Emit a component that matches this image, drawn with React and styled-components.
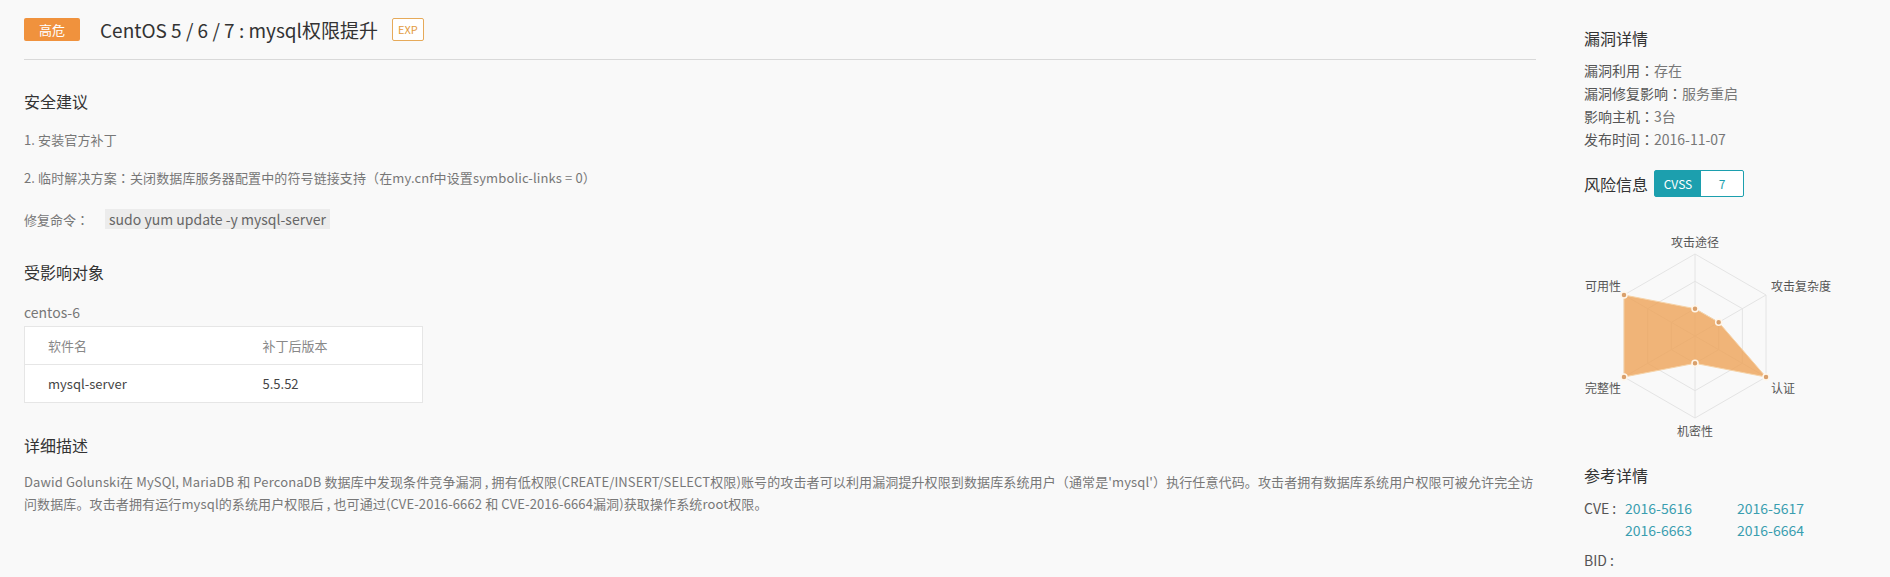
import React from "react";
import styled, { createGlobalStyle } from "styled-components";

const GlobalStyle = createGlobalStyle`
  body {
    margin: 0;
    background: #f9f9f9;
    font-family: "Noto Sans CJK SC", "Noto Sans", sans-serif;
    color: #666;
  }
`;

const Page = styled.div`
  display: flex;
  gap: 48px;
  padding: 0 24px;
  min-height: 577px;
  box-sizing: border-box;
`;

const Main = styled.main`
  flex: 1;
  min-width: 0;
`;

const Header = styled.header`
  display: flex;
  align-items: center;
  padding: 17px 0 18px;
  height: 24px;
  border-bottom: 1px solid #d9d9d9;
`;

const LevelBadge = styled.span`
  display: inline-flex;
  align-items: center;
  justify-content: center;
  width: 56px;
  height: 23px;
  background: #f0923d;
  color: #fff;
  font-size: 13px;
  border-radius: 2px;
`;

const Title = styled.h1`
  margin: 0 0 0 20px;
  font-size: 19px;
  font-weight: 400;
  color: #333;
`;

const ExpTag = styled.span`
  margin-left: 14px;
  padding: 2px 5px;
  border: 1px solid #e6aa5a;
  border-radius: 2px;
  background: #fff;
  color: #e39b3c;
  font-size: 11px;
  line-height: 17px;
`;

// centred full-width colon, as the original CJK font draws it
const Colon = styled.span`
  font-family: "Noto Sans CJK TC", "Noto Sans CJK SC", sans-serif;
`;

const SectionTitle = styled.h2`
  margin: ${({ $top }) => $top}px 0 0;
  font-size: 16px;
  font-weight: 400;
  line-height: 22px;
  color: #333;
`;

const Advice = styled.p`
  margin: 18px 0 0;
  font-size: 13px;
  line-height: 20px;
  letter-spacing: 0.12px;
  color: #777;
`;

const CommandRow = styled.div`
  display: flex;
  align-items: center;
  margin-top: 19px;
  height: 24px;
  font-size: 13px;
  color: #777;
`;

const Code = styled.code`
  margin-left: 16px;
  padding: 0 4px;
  background: #ececec;
  font-family: "Noto Sans CJK SC", "Noto Sans", sans-serif;
  font-size: 14px;
  line-height: 20px;
  color: #666;
`;

const HostName = styled.div`
  margin: 19px 0 4px;
  font-size: 14px;
  line-height: 20px;
  color: #777;
`;

const Table = styled.table`
  width: 399px;
  table-layout: fixed;
  border-collapse: collapse;
  background: #fff;
  border: 1px solid #e6e6e6;
  font-size: 13px;
`;

const Cell = styled.td`
  box-sizing: border-box;
  height: 38px;
  padding: 0 0 0 23px;
  width: ${({ $w }) => $w || "auto"};
  color: ${({ $head }) => ($head ? "#888" : "#444")};
  border-bottom: 1px solid #e6e6e6;
`;

const Description = styled.p`
  margin: 15px 0 0;
  font-size: 13px;
  line-height: 22px;
  letter-spacing: 0.12px;
  color: #777;
`;

const Sidebar = styled.aside`
  width: 282px;
  flex-shrink: 0;
  padding-top: 27px;
`;

const SideTitle = styled.h3`
  margin: ${({ $top }) => $top || 0}px 0 0;
  font-size: 16px;
  font-weight: 400;
  line-height: 22px;
  color: #333;
`;

const InfoList = styled.div`
  margin-top: 10px;
  font-size: 14px;
  line-height: 23px;
  color: #777;
`;

const InfoLabel = styled.span`
  color: #555;
`;

const RiskRow = styled.div`
  display: flex;
  align-items: center;
  margin-top: 19px;
  gap: 6px;
`;

const CvssBox = styled.div`
  display: flex;
  height: 25px;
  border: 1px solid #1c9fae;
  border-radius: 2px;
  background: #fff;
  font-size: 12px;
`;

const CvssLabel = styled.span`
  display: flex;
  align-items: center;
  justify-content: center;
  width: 46px;
  background: #1c9fae;
  color: #fff;
`;

const CvssScore = styled.span`
  display: flex;
  align-items: center;
  justify-content: center;
  width: 42px;
  color: #1c9fae;
`;

const Radar = styled.svg`
  display: block;
  margin-top: 30px;
  overflow: visible;
`;

const RefRow = styled.div`
  display: flex;
  align-items: flex-start;
  margin-top: ${({ $top }) => $top}px;
  font-size: 14px;
  line-height: 22px;
  color: #555;
`;

const RefLabel = styled.span`
  width: 41px;
  flex-shrink: 0;
  white-space: nowrap;
`;

const RefLinks = styled.div`
  display: grid;
  grid-template-columns: 112px 112px;
`;

const RefLink = styled.a`
  color: #3a9eb0;
  text-decoration: none;
`;

const info = [
  ["漏洞利用", "存在"],
  ["漏洞修复影响", "服务重启"],
  ["影响主机", "3台"],
  ["发布时间", "2016-11-07"],
];

const cves = ["2016-5616", "2016-5617", "2016-6663", "2016-6664"];

const axes = [
  { label: "攻击途径", value: 1 / 3, angle: -90, lx: 111, ly: 20, anchor: "middle" },
  { label: "攻击复杂度", value: 1 / 3, angle: -30, lx: 187, ly: 64, anchor: "start" },
  { label: "认证", value: 1, angle: 30, lx: 187, ly: 166, anchor: "start" },
  { label: "机密性", value: 1 / 3, angle: 90, lx: 111, ly: 209, anchor: "middle" },
  { label: "完整性", value: 1, angle: 150, lx: 37, ly: 166, anchor: "end" },
  { label: "可用性", value: 1, angle: 210, lx: 37, ly: 64, anchor: "end" },
];

const CX = 111;
const CY = 109;
const R = 82;

const pt = (angle, r) => {
  const a = (angle * Math.PI) / 180;
  return [CX + r * Math.cos(a), CY + r * Math.sin(a)];
};

function RadarChart() {
  const ring = (f) => axes.map((a) => pt(a.angle, R * f).join(",")).join(" ");
  const data = axes.map((a) => pt(a.angle, R * a.value));
  return (
    <Radar width="260" height="216" viewBox="0 0 260 216">
      {[1 / 3, 2 / 3, 1].map((f) => (
        <polygon key={f} points={ring(f)} fill="none" stroke="#e4e4e4" strokeWidth="1" />
      ))}
      {axes.map((a) => {
        const [x, y] = pt(a.angle, R);
        return <line key={a.label} x1={CX} y1={CY} x2={x} y2={y} stroke="#e4e4e4" strokeWidth="1" />;
      })}
      <polygon
        points={data.map((p) => p.join(",")).join(" ")}
        fill="rgba(238, 163, 88, 0.8)"
        stroke="#f6d3a8"
        strokeWidth="1"
      />
      {data.map(([x, y], i) => (
        <circle key={i} cx={x} cy={y} r="3" fill="#d9a06c" stroke="#fff6ea" strokeWidth="1.5" />
      ))}
      {axes.map((a) => (
        <text
          key={a.label}
          x={a.lx}
          y={a.ly}
          textAnchor={a.anchor}
          fontSize="12"
          fill="#555"
          fontFamily='"Noto Sans CJK SC", sans-serif'
        >
          {a.label}
        </text>
      ))}
    </Radar>
  );
}

export default function App() {
  return (
    <>
      <GlobalStyle />
      <Page>
        <Main>
          <Header>
            <LevelBadge>高危</LevelBadge>
            <Title>CentOS 5 / 6 / 7 : mysql权限提升</Title>
            <ExpTag>EXP</ExpTag>
          </Header>

          <SectionTitle $top={30}>安全建议</SectionTitle>
          <Advice>1. 安装官方补丁</Advice>
          <Advice>
            2. 临时解决方案<Colon>：</Colon>关闭数据库服务器配置中的符号链接支持（在my.cnf中设置symbolic-links = 0）
          </Advice>
          <CommandRow>
            修复命令<Colon>：</Colon>
            <Code>sudo yum update -y mysql-server</Code>
          </CommandRow>

          <SectionTitle $top={30}>受影响对象</SectionTitle>
          <HostName>centos-6</HostName>
          <Table>
            <tbody>
              <tr>
                <Cell $head $w="215px">软件名</Cell>
                <Cell $head>补丁后版本</Cell>
              </tr>
              <tr>
                <Cell>mysql-server</Cell>
                <Cell>5.5.52</Cell>
              </tr>
            </tbody>
          </Table>

          <SectionTitle $top={31}>详细描述</SectionTitle>
          <Description>
            Dawid Golunski在 MySQl, MariaDB 和 PerconaDB 数据库中发现条件竞争漏洞 , 拥有低权限(CREATE/INSERT/SELECT权限)账号的攻击者可以利用漏洞提升权限到数据库系统用户（通常是'mysql'）执行任意代码。攻击者拥有数据库系统用户权限可被允许完全访问数据库。攻击者拥有运行mysql的系统用户权限后 , 也可通过(CVE-2016-6662 和 CVE-2016-6664漏洞)获取操作系统root权限。
          </Description>
        </Main>

        <Sidebar>
          <SideTitle>漏洞详情</SideTitle>
          <InfoList>
            {info.map(([k, v]) => (
              <div key={k}>
                <InfoLabel>
                  {k}
                  <Colon>：</Colon>
                </InfoLabel>
                {v}
              </div>
            ))}
          </InfoList>

          <RiskRow>
            <SideTitle>风险信息</SideTitle>
            <CvssBox>
              <CvssLabel>CVSS</CvssLabel>
              <CvssScore>7</CvssScore>
            </CvssBox>
          </RiskRow>

          <RadarChart />

          <SideTitle $top={21}>参考详情</SideTitle>
          <RefRow $top={11}>
            <RefLabel>CVE :</RefLabel>
            <RefLinks>
              {cves.map((c) => (
                <RefLink key={c} href="#">
                  {c}
                </RefLink>
              ))}
            </RefLinks>
          </RefRow>
          <RefRow $top={8}>
            <RefLabel>BID :</RefLabel>
          </RefRow>
        </Sidebar>
      </Page>
    </>
  );
}
